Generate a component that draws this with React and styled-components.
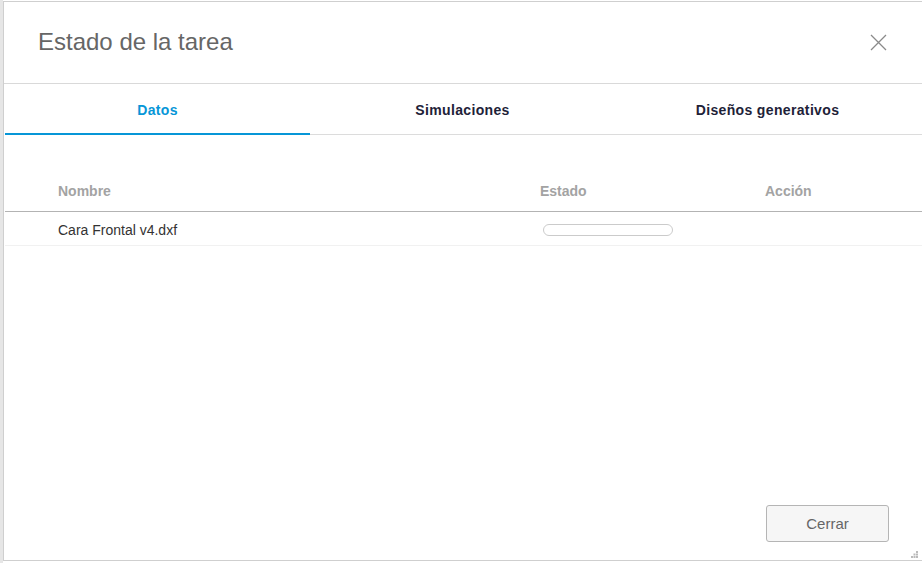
import styled, { createGlobalStyle } from 'styled-components';

const GlobalStyle = createGlobalStyle`
  html, body {
    margin: 0;
    padding: 0;
    background: #ffffff;
    overflow: hidden;
  }
  body {
    font-family: "Liberation Sans", Arial, sans-serif;
  }
`;

const Page = styled.div`
  width: 922px;
  height: 563px;
  overflow: hidden;
  padding: 1px 0 0 3px;
  box-sizing: border-box;
  background: linear-gradient(to right, #e6e6e6 0 3px, #ffffff 3px);
`;

const Dialog = styled.div`
  position: relative;
  width: 922px;
  height: 560px;
  box-sizing: border-box;
  border: 1px solid #cfcfcf;
  background: #fff;
  display: flex;
  flex-direction: column;
`;

const Header = styled.div`
  height: 81px;
  flex: none;
  display: flex;
  align-items: center;
  justify-content: space-between;
  padding: 0 37px 0 34px;
  border-bottom: 1px solid #d9d9d9;
`;

const Title = styled.h1`
  margin: 0;
  font-size: 24px;
  font-weight: 400;
  color: #666;
  padding-bottom: 2px;
`;

const CloseButton = styled.button`
  width: 17px;
  height: 17px;
  padding: 0;
  border: 0;
  background: none;
  display: flex;
  cursor: pointer;
`;

const Tabs = styled.div`
  display: flex;
  margin: 0 0 0 1px;
  border-bottom: 1px solid #dcdcdc;
`;

const Tab = styled.div`
  width: 305px;
  height: 51px;
  box-sizing: border-box;
  display: flex;
  align-items: center;
  justify-content: center;
  padding-top: 3px;
  font-size: 14px;
  font-weight: 700;
  letter-spacing: 0.35px;
  color: ${({ $active }) => ($active ? '#0696d7' : '#1e2238')};
  border-bottom: 2px solid ${({ $active }) => ($active ? '#0696d7' : 'transparent')};
  margin-bottom: -1px;
`;

const Body = styled.div`
  flex: 1;
  margin: 35px 0 0 1px;
`;

const Row = styled.div`
  display: grid;
  grid-template-columns: 482px 225px 1fr;
  height: ${({ $head }) => ($head ? '41px' : '33px')};
  border-bottom: 1px solid ${({ $head }) => ($head ? '#b3b3b3' : '#f1f1f1')};
`;

const Cell = styled.div`
  display: flex;
  align-items: center;
  padding-left: 53px;
  font-size: 14px;
  font-weight: ${({ $head }) => ($head ? 700 : 400)};
  color: ${({ $head }) => ($head ? '#a3a3a3' : '#333')};
  padding-top: ${({ $head }) => ($head ? '1px' : '2px')};
`;

const Progress = styled.div`
  width: 130px;
  height: 12px;
  margin-left: 3px;
  box-sizing: border-box;
  border: 1px solid #cbcbcb;
  border-radius: 6px;
`;

const Footer = styled.div`
  display: flex;
  justify-content: flex-end;
  padding: 0 35px 18px 0;
`;

const Button = styled.button`
  width: 123px;
  height: 37px;
  border: 1px solid #b5b5b5;
  border-radius: 3px;
  background: #f6f6f6;
  color: #666;
  font-family: "Liberation Sans", Arial, sans-serif;
  font-size: 15px;
  cursor: pointer;
`;

const Grip = styled.svg`
  position: absolute;
  right: 6px;
  bottom: 2px;
`;

function App() {
  return (
    <>
      <GlobalStyle />
      <Page>
        <Dialog>
          <Header>
            <Title>Estado de la tarea</Title>
            <CloseButton aria-label="Cerrar">
              <svg width="17" height="17" viewBox="0 0 17 17">
                <path d="M1 1 L16 16 M16 1 L1 16" stroke="#8a8a8a" strokeWidth="1.3" fill="none" />
              </svg>
            </CloseButton>
          </Header>
          <Tabs>
            <Tab $active>Datos</Tab>
            <Tab>Simulaciones</Tab>
            <Tab>Diseños generativos</Tab>
          </Tabs>
          <Body>
            <Row $head>
              <Cell $head>Nombre</Cell>
              <Cell $head>Estado</Cell>
              <Cell $head>Acción</Cell>
            </Row>
            <Row>
              <Cell>Cara Frontal v4.dxf</Cell>
              <Cell>
                <Progress />
              </Cell>
              <Cell />
            </Row>
          </Body>
          <Footer>
            <Button>Cerrar</Button>
          </Footer>
          <Grip width="7" height="7" viewBox="0 0 7 7">
            <rect x="5" y="0" width="2" height="2" fill="#bbb" />
            <rect x="2.5" y="2.5" width="2" height="2" fill="#bbb" />
            <rect x="5" y="2.5" width="2" height="2" fill="#bbb" />
            <rect x="0" y="5" width="2" height="2" fill="#bbb" />
            <rect x="2.5" y="5" width="2" height="2" fill="#bbb" />
            <rect x="5" y="5" width="2" height="2" fill="#bbb" />
          </Grip>
        </Dialog>
      </Page>
    </>
  );
}

export default App;
